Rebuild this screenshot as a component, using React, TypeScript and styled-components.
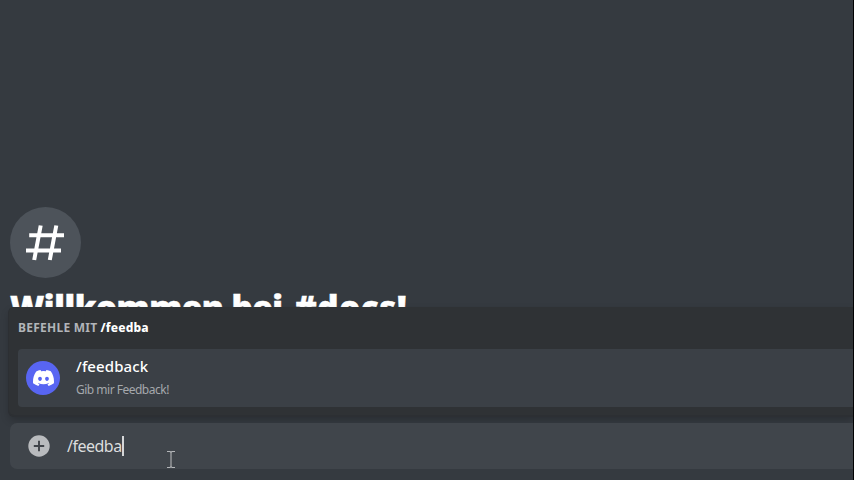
import React from "react";
import styled, { createGlobalStyle } from "styled-components";

const GlobalStyle = createGlobalStyle`
  * { box-sizing: border-box; }
  body { margin: 0; background: #353a40; overflow: hidden; }
`;

const Window = styled.main`
  display: flex;
  flex-direction: column;
  width: 854px;
  height: 480px;
  overflow: hidden;
  background: #353a40;
  border-right: 1px solid #020203;
  font-family: "Noto Sans", "Open Sans", sans-serif;
`;

const Welcome = styled.section`
  height: 307px;
  flex: none;
  overflow: hidden;
  padding: 207px 0 0 10px;
`;

const ChannelBadge = styled.div`
  width: 71px;
  height: 71px;
  border-radius: 50%;
  background: #4d535a;
`;

const Label = styled.span<{ $size: number; $weight: number; $color: string; $spacing?: number }>`
  display: block;
  white-space: nowrap;
  font-size: ${(p) => p.$size}px;
  font-weight: ${(p) => p.$weight};
  color: ${(p) => p.$color};
  letter-spacing: ${(p) => p.$spacing ?? 0}px;
`;

const Title = styled.h1`
  margin: 10px 0 0 0;
  font-size: 33px;
  line-height: 40px;
  font-weight: 900;
  letter-spacing: -0.42px;
  white-space: nowrap;
  color: #fff;
  -webkit-text-stroke: 0.5px #fff;
`;

const ChannelName = styled.span`
  margin-left: 4px;
  letter-spacing: 0.65px;
`;

const CommandPanel = styled.section`
  flex: none;
  height: 108px;
  margin-left: 9px;
  padding: 10px 0 0 9px;
  background: #2f3235;
  border-radius: 5px 0 0 5px;
  box-shadow: 0 1px 0 1px #2c2f33, 0 5px 8px rgba(0, 0, 0, 0.22);
`;

const PanelHeader = styled.header`
  display: flex;
  gap: 3px;
  height: 32px;
  line-height: 21px;
`;

const CommandRow = styled.div`
  display: flex;
  align-items: center;
  gap: 16px;
  height: 58px;
  padding-left: 8px;
  border-radius: 4px 0 0 4px;
  background: #3b4046;
`;

const AppAvatar = styled.div`
  display: flex;
  align-items: center;
  justify-content: center;
  width: 34px;
  height: 34px;
  border-radius: 50%;
  background: #5865f2;
`;

const CommandText = styled.div`
  display: flex;
  flex-direction: column;
  line-height: 23px;
`;

const Composer = styled.div`
  display: flex;
  align-items: center;
  flex: none;
  height: 46px;
  margin: 8px 0 0 10px;
  padding-left: 18px;
  border-radius: 7px 0 0 7px;
  background: #40454b;
`;

const Draft = styled.div`
  display: flex;
  align-items: center;
  margin-left: 17px;
`;

const Caret = styled.i`
  width: 2px;
  height: 20px;
  background: #d5d6d8;
`;

const Pointer = styled.svg`
  position: absolute;
  left: 166px;
  top: 450px;
`;

export default function App() {
  return (
    <Window>
      <GlobalStyle />
      <Welcome>
        <ChannelBadge>
          <svg width="71" height="71" viewBox="0 0 71 71" fill="none" stroke="#fff" strokeWidth="4">
            <path d="M30.7 18.5 24.2 53M46.3 18.5 39.8 53M19.2 28.3H54M16 43.5H51" />
          </svg>
        </ChannelBadge>
        <Title>
          Willkommen bei <ChannelName>#docs!</ChannelName>
        </Title>
      </Welcome>
      <CommandPanel>
        <PanelHeader>
          <Label $size={12} $weight={700} $color="#b2b5b9" $spacing={0.25}>BEFEHLE MIT</Label>
          <Label $size={12} $weight={800} $color="#fff" $spacing={0.2}>/feedba</Label>
        </PanelHeader>
        <CommandRow>
          <AppAvatar>
            <svg width="21" height="16" viewBox="0 0 127.14 96.36" fill="#fff">
              <path d="M107.7,8.07A105.15,105.15,0,0,0,81.47,0a72.06,72.06,0,0,0-3.36,6.83A97.68,97.68,0,0,0,49,6.83,72.37,72.37,0,0,0,45.64,0,105.89,105.89,0,0,0,19.39,8.09C2.79,32.65-1.71,56.6.54,80.21A105.73,105.73,0,0,0,32.71,96.36,77.7,77.7,0,0,0,39.6,85.25a68.42,68.42,0,0,1-10.85-5.18c.91-.66,1.8-1.34,2.66-2a75.57,75.57,0,0,0,64.32,0c.87.71,1.76,1.39,2.66,2a68.68,68.68,0,0,1-10.87,5.19,77,77,0,0,0,6.89,11.1A105.25,105.25,0,0,0,126.6,80.22C129.24,52.84,122.09,29.11,107.7,8.07ZM42.45,65.69C36.18,65.69,31,60,31,53s5-12.74,11.43-12.74S54,46,53.89,53,48.84,65.69,42.45,65.69Zm42.24,0C78.41,65.69,73.25,60,73.25,53s5-12.74,11.44-12.74S96.23,46,96.12,53,91.08,65.69,84.69,65.69Z" />
            </svg>
          </AppAvatar>
          <CommandText>
            <Label $size={15} $weight={500} $color="#fff" $spacing={0.1}>/feedback</Label>
            <Label $size={12} $weight={400} $color="#a5a8ac" $spacing={-0.5}>Gib mir Feedback!</Label>
          </CommandText>
        </CommandRow>
      </CommandPanel>
      <Composer>
        <svg width="22" height="22" viewBox="0 0 22 22" fill="none">
          <circle cx="11" cy="11" r="10.7" fill="#b9bbbe" />
          <path d="M11 5.8V16.2M5.8 11H16.2" stroke="#40444a" strokeWidth="1.9" />
        </svg>
        <Draft>
          <Label $size={16} $weight={400} $color="#dcddde" $spacing={-0.5}>/feedba</Label>
          <Caret />
        </Draft>
      </Composer>
      <Pointer width="10" height="19" viewBox="0 0 10 19" fill="none" stroke="#b4b6b9" strokeWidth="1.1">
        <path d="M1 1.5H4L5 2.5 6 1.5H9M5 2.5V16.5M1 17.5H4L5 16.5 6 17.5H9" />
      </Pointer>
    </Window>
  );
}
